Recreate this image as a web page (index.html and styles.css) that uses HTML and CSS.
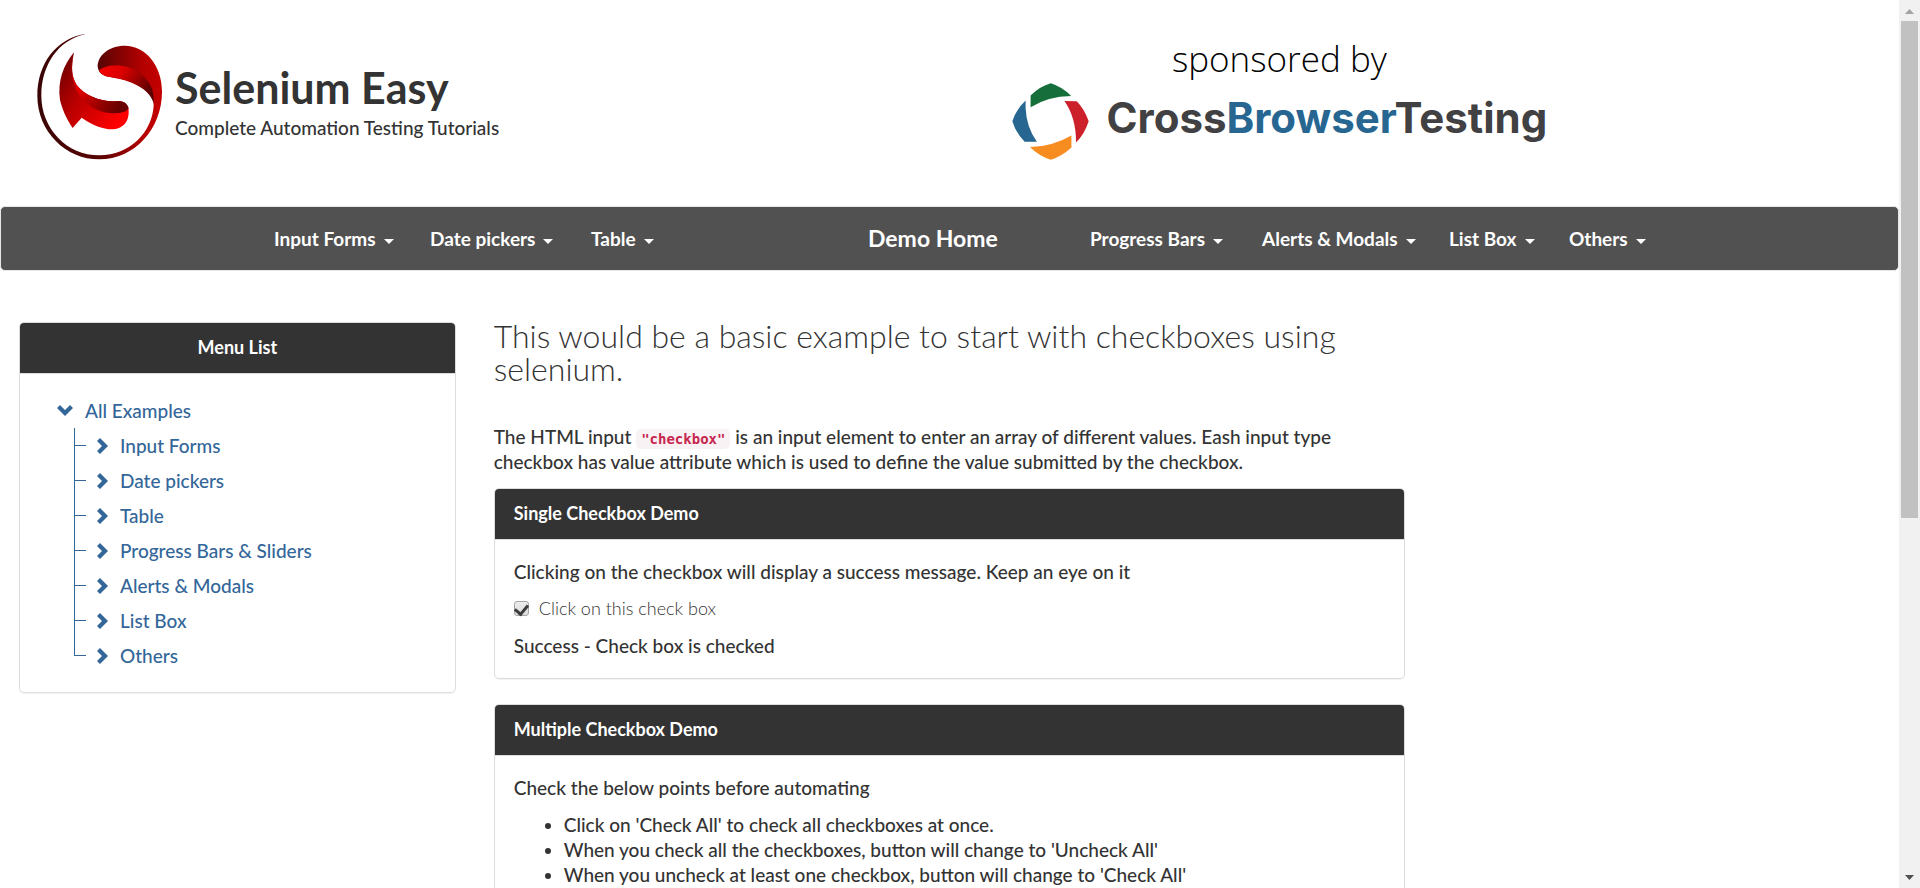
FILE: index.html
```html
<!DOCTYPE html>
<html lang="en">
<head>
<meta charset="utf-8">
<title>Selenium Easy - Checkbox demo</title>
<link rel="stylesheet" href="styles.css">
</head>
<body>
<svg class="symbols" aria-hidden="true">
  <symbol id="chevron-right" viewBox="0 0 11 16"><path d="M0 3 3 0 11 8 3 16 0 13 5 8Z"/></symbol>
  <symbol id="chevron-down" viewBox="0 0 16 11"><path d="M0 3 3 0 8 5 13 0 16 3 8 11Z"/></symbol>
</svg>
<div class="page">
  <header class="header">
    <a class="brand" href="#">
      <svg class="brand-logo" viewBox="0 0 420 420" aria-hidden="true">
        <defs>
          <linearGradient id="ring" x1="0" x2="1" y1="0" y2="0"><stop offset="0" stop-color="#3a0505"/><stop offset=".5" stop-color="#5a0404"/><stop offset=".85" stop-color="#b50000"/><stop offset="1" stop-color="#c40000"/></linearGradient>
          <linearGradient id="fold" x1="0" x2="1" y1="0" y2=".5"><stop offset="0" stop-color="#f80000"/><stop offset=".4" stop-color="#dc0000"/><stop offset="1" stop-color="#5c0000"/></linearGradient>
          <linearGradient id="shade" x1="0" x2="1" y1="0" y2=".6"><stop offset="0" stop-color="#a00000"/><stop offset=".35" stop-color="#e40000"/><stop offset="1" stop-color="#680000"/></linearGradient>
          <linearGradient id="glow" x1="0" x2="1" y1="0" y2=".7"><stop offset="0" stop-color="#600000"/><stop offset=".45" stop-color="#b80000"/><stop offset="1" stop-color="#ff0000"/></linearGradient>
        </defs>
        <path fill="url(#ring)" d="M165 27C80 40 22 115 22 212 22 320 108 403 208 403 315 403 396 310 396 200 396 120 345 62 285 62 235 62 203 92 203 125 205 145 222 153 240 156 310 166 372 190 371 240 368 320 300 391 208 391 110 391 34 310 34 212 34 120 85 45 165 28Z"/>
        <path fill="url(#fold)" d="M207 137C225 118 290 112 335 148 365 175 374 205 371 236 360 190 300 165 240 156 222 153 212 147 207 137Z"/>
        <path fill="url(#glow)" d="M132 82C100 120 82 170 90 225 100 265 115 290 128 309L155 278C185 300 220 314 250 313 280 310 298 290 296 255 294 238 282 226 262 228 215 232 165 213 140 180 125 155 122 130 132 82Z"/>
        <path fill="url(#shade)" d="M132 82C122 130 125 155 140 180 165 213 215 232 262 228 282 226 294 238 296 250 288 264 265 266 240 264 170 258 122 200 124 120Z"/>
      </svg>
      <span class="brand-text">
        <span class="brand-name">Selenium Easy</span>
        <span>Complete Automation Testing Tutorials</span>
      </span>
    </a>
    <a class="sponsor" href="#">
      <span class="sponsor-label">sponsored by</span>
      <span class="sponsor-row">
        <svg class="sponsor-logo" viewBox="0 0 232 232" aria-hidden="true">
          <path fill="#166f3a" d="M56 38Q84 10 117 1 152 12 178 39 108 40 56 73Z"/>
          <path fill="#cc202a" d="M158 54 195 55Q218 78 231 115 219 153 193 179 193 104 158 54Z"/>
          <path fill="#f78c20" d="M179 158V194Q151 220 117 231 82 221 54 193 120 192 179 158Z"/>
          <path fill="#266691" d="M41 53V75Q43 132 75 177L38 177Q13 153 1 115 12 80 41 53Z"/>
        </svg>
        <span class="sponsor-name">Cross<span class="sponsor-accent">Browser</span>Testing</span>
      </span>
    </a>
  </header>

  <nav class="navbar">
    <div class="nav-left">
      <a class="nav-link dropdown" href="#">Input Forms</a>
      <a class="nav-link dropdown" href="#">Date pickers</a>
      <a class="nav-link dropdown" href="#">Table</a>
    </div>
    <a class="nav-link nav-home" href="#">Demo Home</a>
    <div class="nav-right">
      <a class="nav-link dropdown" href="#">Progress Bars</a>
      <a class="nav-link dropdown" href="#">Alerts &amp; Modals</a>
      <a class="nav-link dropdown" href="#">List Box</a>
      <a class="nav-link dropdown" href="#">Others</a>
    </div>
  </nav>

  <div class="columns">
    <aside class="column column-menu">
      <section class="panel">
        <h2 class="panel-title panel-title-center">Menu List</h2>
        <div class="tree">
          <a class="tree-link" href="#"><svg class="icon-down"><use href="#chevron-down"/></svg>All Examples</a>
          <ul class="tree-list">
            <li class="tree-item"><a class="tree-link" href="#"><svg class="icon-right"><use href="#chevron-right"/></svg>Input Forms</a></li>
            <li class="tree-item"><a class="tree-link" href="#"><svg class="icon-right"><use href="#chevron-right"/></svg>Date pickers</a></li>
            <li class="tree-item"><a class="tree-link" href="#"><svg class="icon-right"><use href="#chevron-right"/></svg>Table</a></li>
            <li class="tree-item"><a class="tree-link" href="#"><svg class="icon-right"><use href="#chevron-right"/></svg>Progress Bars &amp; Sliders</a></li>
            <li class="tree-item"><a class="tree-link" href="#"><svg class="icon-right"><use href="#chevron-right"/></svg>Alerts &amp; Modals</a></li>
            <li class="tree-item"><a class="tree-link" href="#"><svg class="icon-right"><use href="#chevron-right"/></svg>List Box</a></li>
            <li class="tree-item"><a class="tree-link" href="#"><svg class="icon-right"><use href="#chevron-right"/></svg>Others</a></li>
          </ul>
        </div>
      </section>
    </aside>
    <main class="column">
      <h1 class="lead">This would be a basic example to start with checkboxes using selenium.</h1>
      <p class="intro">The HTML input <code class="code">"checkbox"</code> is an input element to enter an array of different values. Eash input type checkbox has value attribute which is used to define the value submitted by the checkbox.</p>
      <section class="panel">
        <h2 class="panel-title">Single Checkbox Demo</h2>
        <div class="panel-body">
          <p>Clicking on the checkbox will display a success message. Keep an eye on it</p>
          <label class="check" for="single"><input class="check-box" type="checkbox" id="single" checked>Click on this check box</label>
          <p>Success - Check box is checked</p>
        </div>
      </section>
      <section class="panel">
        <h2 class="panel-title">Multiple Checkbox Demo</h2>
        <div class="panel-body">
          <p>Check the below points before automating</p>
          <ul class="points">
            <li>Click on 'Check All' to check all checkboxes at once.</li>
            <li>When you check all the checkboxes, button will change to 'Uncheck All'</li>
            <li>When you uncheck at least one checkbox, button will change to 'Check All'</li>
          </ul>
        </div>
      </section>
    </main>
  </div>
</div>
<div class="scrollbar" aria-hidden="true">
  <svg class="scroll-arrow" viewBox="0 0 21 21"><path fill="#a3a3a3" d="M6 14 10.500 9 15 14Z"/></svg>
  <div class="scroll-thumb"></div>
  <svg class="scroll-arrow" viewBox="0 0 21 21"><path fill="#505050" d="M6 8 10.500 13 15 8Z"/></svg>
</div>
</body>
</html>
```
FILE: styles.css
```css
* { box-sizing: border-box; }

body {
  display: flex;
  height: 100vh;
  margin: 0;
  overflow: hidden;
  background: #fff;
  color: #333;
  font: 500 19px/25px Lato, sans-serif;
}

h1, h2, p, ul { margin: 0; }
a { color: inherit; text-decoration: none; }
.symbols { position: absolute; width: 0; height: 0; }
.page { flex: 1; min-width: 0; }

/* Header */
.header {
  display: grid;
  grid-template-columns: 1fr 1fr;
  padding: 25px 0 41px 30px;
}
.brand { display: flex; gap: 5px; }
.brand-logo { width: 140px; height: 140px; }
.brand-text { display: flex; flex-direction: column; padding-top: 38px; }
.brand-name { font-size: 43px; font-weight: 700; line-height: 50px; padding-bottom: 2px; }
.sponsor {
  display: flex;
  flex-direction: column;
  justify-self: start;
  padding: 10px 0 0 47px;
  color: #414042;
}
.sponsor-label {
  align-self: center;
  color: #000;
  font: 300 35px/48px "Open Sans", sans-serif;
}
.sponsor-row { display: flex; align-items: center; gap: 18px; }
.sponsor-logo { width: 77px; height: 77px; }
.sponsor-name { font: 700 42px/70px Inter, sans-serif; padding-bottom: 7px; }
.sponsor-accent { color: #266691; }

/* Navigation */
.navbar {
  display: grid;
  grid-template-columns: 594fr 222fr 808fr;
  align-items: center;
  min-height: 65px;
  padding-left: 273px;
  border: 1px solid #e7e7e7;
  border-radius: 5px;
  background: #515151;
  color: #fff;
  font-weight: 700;
}
.nav-left { display: grid; grid-template-columns: 156px 161px auto; justify-content: start; }
.nav-home { justify-self: start; font-size: 23px; }
.nav-right { display: grid; grid-template-columns: 172px 187px 120px auto; justify-content: start; }
.nav-link { white-space: nowrap; }
.dropdown::after {
  content: "";
  display: inline-block;
  margin-left: 8px;
  border: 5px solid transparent;
  border-top-color: currentColor;
  border-bottom: 0;
  vertical-align: middle;
}

/* Columns */
.columns { display: grid; grid-template-columns: 1fr 2fr 1fr; padding-top: 48px; }
.column { padding: 0 19px; }
.column-menu { padding-top: 3px; }
.lead { font-size: 32px; font-weight: 300; line-height: 33px; }
.intro { margin: 39px 0 14px; }
.code {
  padding: 2px 5px;
  border-radius: 5px;
  background: #f9f2f4;
  color: #c7254e;
  font: 700 14px "DejaVu Sans Mono", monospace;
}

/* Panels */
.panel {
  margin-bottom: 25px;
  border: 1px solid #ddd;
  border-radius: 5px;
  box-shadow: 0 1px 1px rgba(0, 0, 0, .05);
}
.panel-title {
  padding: 12px 19px 13px;
  border-bottom: 1px solid #ddd;
  border-radius: 4px 4px 0 0;
  background: #333;
  color: #fff;
  font-size: 18px;
  font-weight: 700;
}
.panel-title-center { text-align: center; }
.panel-body { display: grid; gap: 12px; padding: 19px 19px 20px; }
.check {
  display: flex;
  align-items: center;
  gap: 10px;
  font-size: 18px;
  font-weight: 300;
}
.check-box {
  display: grid;
  place-items: center;
  width: 15px;
  height: 15px;
  margin: 0;
  appearance: none;
  border: 1px solid #a6a6a6;
  border-radius: 3px;
  background: linear-gradient(#ededed, #dcdcdc);
}
.check-box:checked::before {
  content: "";
  width: 6px;
  height: 10px;
  margin-bottom: 2px;
  border: solid #3c3c3c;
  border-width: 0 3px 3px 0;
  transform: rotate(40deg);
}
.points { padding-left: 50px; }

/* Menu tree */
.tree { padding: 19px 36px 19px 37px; color: #369; }
.tree-link { display: flex; align-items: center; gap: 12px; height: 35px; }
.icon-down { width: 16px; height: 11px; fill: currentColor; }
.icon-right { width: 11px; height: 16px; fill: currentColor; }
.tree-list { padding: 0 0 0 17px; list-style: none; }
.tree-item {
  display: flex;
  align-items: center;
  gap: 11px;
  background: linear-gradient(#369, #369) left / 1px 100% no-repeat;
}
.tree-item:last-child { background-position: left top; background-size: 1px 50%; }
.tree-item::before { content: ""; width: 12px; height: 1px; background: #369; }

/* Scroll bar */
.scrollbar { display: flex; flex-direction: column; width: 21px; background: #f1f1f1; }
.scroll-arrow { width: 21px; height: 21px; }
.scroll-thumb { height: 56%; margin: 0 2px auto; background: #c1c1c1; }
```
